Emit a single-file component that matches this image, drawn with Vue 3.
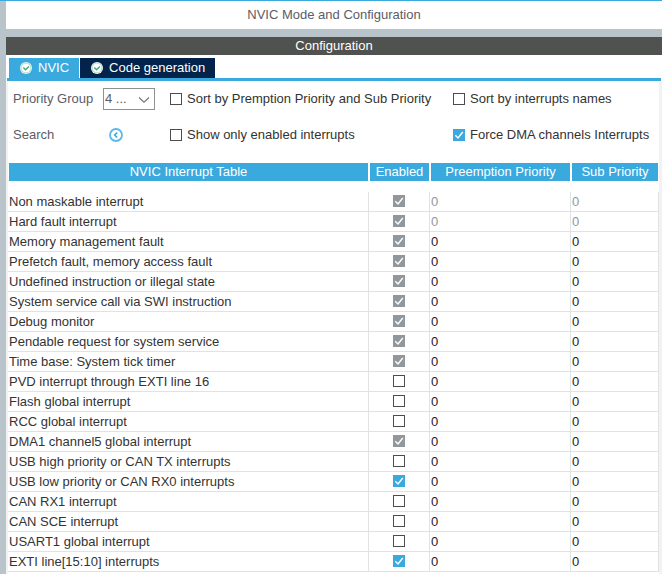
<script setup>
import { ref } from 'vue'

const activeTab = ref('NVIC')
const tabs = ['NVIC', 'Code generation']
const priorityGroup = ref('4')

const sortByPriority = ref(false)
const sortByName = ref(false)
const onlyEnabled = ref(false)
const forceDma = ref(true)

const row = (name, enabled, locked = false, fixed = false) => ({ name, enabled, locked, fixed, preemption: 0, sub: 0 })

const rows = ref([
  row('Non maskable interrupt', true, true, true),
  row('Hard fault interrupt', true, true, true),
  row('Memory management fault', true, true),
  row('Prefetch fault, memory access fault', true, true),
  row('Undefined instruction or illegal state', true, true),
  row('System service call via SWI instruction', true, true),
  row('Debug monitor', true, true),
  row('Pendable request for system service', true, true),
  row('Time base: System tick timer', true, true),
  row('PVD interrupt through EXTI line 16', false),
  row('Flash global interrupt', false),
  row('RCC global interrupt', false),
  row('DMA1 channel5 global interrupt', true, true),
  row('USB high priority or CAN TX interrupts', false),
  row('USB low priority or CAN RX0 interrupts', true),
  row('CAN RX1 interrupt', false),
  row('CAN SCE interrupt', false),
  row('USART1 global interrupt', false),
  row('EXTI line[15:10] interrupts', true)
])
</script>

<template>
  <main class="window">
    <h1 class="title">NVIC Mode and Configuration</h1>
    <section class="config">
      <h2 class="config-title">Configuration</h2>
      <div class="tabs" role="tablist">
        <button
          v-for="tab in tabs"
          :key="tab"
          type="button"
          role="tab"
          class="tab"
          :class="{ active: tab === activeTab }"
          :aria-selected="tab === activeTab"
          @click="activeTab = tab"
        >
          <svg class="tab-icon" viewBox="0 0 12 12" aria-hidden="true">
            <circle cx="6" cy="6" r="6" fill="#fff" />
            <circle cx="6" cy="6" r="5" fill="none" stroke="#4db07c" stroke-width="0.8" opacity="0.6" />
            <path d="M3.3 5.6 L5.5 7.8 L8.9 4.4" fill="none" stroke="#3fae74" stroke-width="1.4" />
          </svg>
          <span>{{ tab }}</span>
        </button>
      </div>

      <div class="panel">
        <div class="options">
          <label class="muted" for="priority-group">Priority Group</label>
          <div class="select-wrap">
            <select id="priority-group" v-model="priorityGroup" class="select">
              <option value="4">4 ...</option>
            </select>
            <svg class="chevron" viewBox="0 0 12 8" aria-hidden="true">
              <path d="M1 1.5 L6 6.2 L11 1.5" fill="none" stroke="#777" stroke-width="1.2" />
            </svg>
          </div>
          <label class="check"><input v-model="sortByPriority" type="checkbox" class="box" />Sort by Premption Priority and Sub Priority</label>
          <label class="check"><input v-model="sortByName" type="checkbox" class="box" />Sort by interrupts names</label>

          <span id="search-label" class="muted">Search</span>
          <button type="button" class="search" aria-labelledby="search-label">
            <svg viewBox="0 0 14 14" aria-hidden="true">
              <circle cx="7" cy="7" r="6" fill="none" stroke="#5cb8e4" stroke-width="1.8" />
              <path d="M8.2 4.5 L5.7 7 L8.2 9.5" fill="none" stroke="#39a9dc" stroke-width="1.7" />
            </svg>
          </button>
          <label class="check"><input v-model="onlyEnabled" type="checkbox" class="box" />Show only enabled interrupts</label>
          <label class="check"><input v-model="forceDma" type="checkbox" class="box" />Force DMA channels Interrupts</label>
        </div>

        <table class="table">
          <thead>
            <tr>
              <th>NVIC Interrupt Table</th>
              <th class="col-enabled">Enabled</th>
              <th class="col-preemption">Preemption Priority</th>
              <th class="col-sub">Sub Priority</th>
            </tr>
          </thead>
          <tbody>
            <tr class="spacer" aria-hidden="true"><td colspan="4"></td></tr>
            <tr v-for="item in rows" :key="item.name" :class="{ fixed: item.fixed }">
              <td>{{ item.name }}</td>
              <td class="center">
                <input v-model="item.enabled" type="checkbox" class="box" :disabled="item.locked" :aria-label="item.name" />
              </td>
              <td class="value">{{ item.preemption }}</td>
              <td class="value">{{ item.sub }}</td>
            </tr>
          </tbody>
        </table>
      </div>
    </section>
  </main>
</template>

<style>
body {
  margin: 0;
  background: #b8c4ca;
}
</style>

<style scoped>
.window {
  border-top: 1px solid #3aa9dd;
  padding-left: 6px;
  background: #b8c4ca;
  color: #333;
  font: 13px/18px "Liberation Sans", Arial, sans-serif;
}

.title,
.config-title {
  margin: 0;
  font-size: 13px;
  font-weight: 400;
  text-align: center;
}

.title {
  background: #fff;
  color: #5c5c66;
  line-height: 28px;
}

.config {
  margin-top: 8px;
  background: #fff;
}

.config-title {
  background: #50524f;
  color: #fff;
  line-height: 18px;
}

.tabs {
  display: flex;
  gap: 1px;
  margin: 0 1px;
  padding: 3px 2px 0;
  border-bottom: 3px solid #3aa9dd;
}

.tab {
  display: flex;
  align-items: center;
  gap: 6px;
  height: 20px;
  padding: 0 10px 0 11px;
  border: 0;
  background: #03234b;
  color: #fff;
  font: inherit;
}

.tab.active {
  background: #3aa9dd;
}

.tab-icon {
  width: 12px;
  height: 12px;
}

.panel {
  padding-bottom: 4px;
  border-left: 2px solid #f2f2f2;
  border-right: 3px solid #f2f2f2;
}

.options {
  display: grid;
  grid-template-columns: 90px 67px 283px 1fr;
  grid-auto-rows: 36px;
  align-items: center;
  padding: 0 0 10px 5px;
  white-space: nowrap;
}

.muted {
  color: #5c5c66;
}

.select-wrap {
  position: relative;
  width: 52px;
  height: 22px;
}

.select {
  appearance: none;
  width: 100%;
  height: 100%;
  padding: 0 16px 0 1px;
  border: 1px solid #8c9196;
  border-radius: 0;
  background: #fff;
  color: #5c5c66;
  font: inherit;
}

.chevron {
  position: absolute;
  top: 8px;
  right: 5px;
  width: 12px;
  height: 8px;
  pointer-events: none;
}

.check {
  display: flex;
  align-items: center;
  gap: 5px;
}

.box {
  appearance: none;
  flex: none;
  width: 12px;
  height: 12px;
  margin: 0;
  border: 1px solid #4c4c4c;
  background: #fff;
}

.box:checked {
  border-color: #3aa9dd;
  background: #3aa9dd url("data:image/svg+xml,%3Csvg xmlns='http://www.w3.org/2000/svg' viewBox='0 0 10 10'%3E%3Cpath d='M1.3 5.2 L4 7.9 L8.8 2' fill='none' stroke='%23fff' stroke-width='1.4'/%3E%3C/svg%3E") center / 10px 10px no-repeat;
}

.box:checked:disabled {
  border-color: #90989e;
  background-color: #90989e;
}

.search {
  justify-self: start;
  width: 14px;
  height: 14px;
  margin-left: 6px;
  padding: 0;
  border: 0;
  background: none;
}

.search svg {
  display: block;
}

.table {
  width: 100%;
  table-layout: fixed;
  border-collapse: separate;
  border-spacing: 0;
}

th {
  height: 18px;
  padding: 0;
  border: solid #fff;
  border-width: 0 1px;
  background: #3aa9dd;
  background-clip: padding-box;
  color: #fff;
  font-weight: 400;
}

.col-enabled {
  width: 59px;
}

.col-preemption {
  width: 139px;
}

.col-sub {
  width: 86px;
}

td {
  height: 19px;
  padding: 0 1px;
  border: solid #e0e3e6;
  border-width: 0 1px 1px 0;
  line-height: 19px;
  white-space: nowrap;
}

.spacer td {
  height: 11px;
  padding: 0;
  border: 0;
}

.center .box {
  display: block;
  margin: 0 auto 1px;
}

.value {
  color: #222;
}

.fixed .value {
  color: #90989e;
}
</style>
